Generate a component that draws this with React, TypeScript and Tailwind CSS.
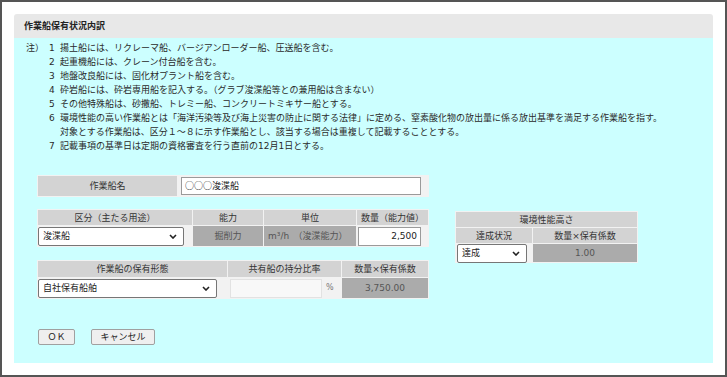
import React from 'react';

const notes: { no: string; lines: string[] }[] = [
  { no: '1', lines: ['揚土船には、リクレーマ船、バージアンローダー船、圧送船を含む。'] },
  { no: '2', lines: ['起重機船には、クレーン付台船を含む。'] },
  { no: '3', lines: ['地盤改良船には、固化材プラント船を含む。'] },
  { no: '4', lines: ['砕岩船には、砕岩専用船を記入する。（グラブ浚渫船等との兼用船は含まない）'] },
  { no: '5', lines: ['その他特殊船は、砂撒船、トレミー船、コンクリートミキサー船とする。'] },
  {
    no: '6',
    lines: [
      '環境性能の高い作業船とは「海洋汚染等及び海上災害の防止に関する法律」に定める、窒素酸化物の放出量に係る放出基準を満足する作業船を指す。',
      '対象とする作業船は、区分１～８に示す作業船とし、該当する場合は重複して記載することとする。',
    ],
  },
  { no: '7', lines: ['記載事項の基準日は定期の資格審査を行う直前の12月1日とする。'] },
];

function Chevron() {
  return (
    <svg width="8" height="5" viewBox="0 0 8 5" className="shrink-0">
      <path d="M1 1l3 3 3-3" fill="none" stroke="#222" strokeWidth="1.6" />
    </svg>
  );
}

function SelectBox({ value, width }: { value: string; width: string }) {
  return (
    <div
      className={`flex h-[19px] items-center justify-between rounded-[2px] border border-[#767676] bg-white pl-[4px] pr-[6px] text-[#222] ${width}`}
    >
      <span>{value}</span>
      <Chevron />
    </div>
  );
}

const head = 'flex items-center justify-center bg-[#d3d3d3] text-[#333]';
const gray = 'flex items-center bg-[#ababab] text-[#555]';

export default function App() {
  return (
    <div className="h-[377px] w-[727px] border-2 border-[#555] bg-white p-[12px] font-['DejaVu_Sans','Noto_Sans_CJK_JP',sans-serif] text-[9px] leading-[14px] text-[#2a2a2a]">
      <div className="flex h-full flex-col">
        <div className="flex h-[24px] shrink-0 items-center rounded-t-[3px] bg-[#e8e8e8] pl-[10px] font-bold text-[#222]">
          作業船保有状況内訳
        </div>

        <div className="flex-1 bg-[#ccffff] pl-[12px] pt-[3px]">
          {/* notes */}
          <div>
            {notes.map((n, i) => (
              <div key={n.no} className="flex">
                <span className="w-[23px] shrink-0">{i === 0 ? '注）' : ''}</span>
                <span className="w-[11px] shrink-0">{n.no}</span>
                <div>
                  {n.lines.map((l) => (
                    <div key={l}>{l}</div>
                  ))}
                </div>
              </div>
            ))}
          </div>

          <div className="ml-[11px] mt-[22px]">
            {/* vessel name */}
            <div className="grid w-[392px] grid-cols-[139px_250px] gap-px bg-[#f2f2f2] p-px">
              <div className={`${head} h-[20px]`}>作業船名</div>
              <div className="flex items-center pl-[3px]">
                <div className="flex h-[18px] w-[240px] items-center border border-[#9a9a9a] bg-white pl-[3px] text-[#222]">
                  <span className="font-['Noto_Sans_CJK_JP',sans-serif]">○○○浚渫船</span>
                </div>
              </div>
            </div>

            <div className="mt-[12px] flex items-start gap-[26px]">
              <div>
                {/* classification */}
                <div className="grid w-[392px] grid-cols-[154px_70px_92px_71px] grid-rows-[15px_20px] gap-px bg-[#f2f2f2] p-px">
                  <div className={head}>区分（主たる用途）</div>
                  <div className={head}>能力</div>
                  <div className={head}>単位</div>
                  <div className={head}>数量（能力値）</div>
                  <div className="flex items-center">
                    <SelectBox value="浚渫船" width="w-[146px]" />
                  </div>
                  <div className={`${gray} justify-center`}>掘削力</div>
                  <div className={`${gray} pl-[4px]`}>m³/h　（浚渫能力）</div>
                  <div className="flex items-center pl-px">
                    <div className="flex h-[19px] w-[63px] items-center justify-end border border-[#9a9a9a] bg-white pr-[3px] text-[#222]">
                      2,500
                    </div>
                  </div>
                </div>

                {/* ownership */}
                <div className="mt-[13px] grid w-[392px] grid-cols-[189px_113px_86px] grid-rows-[16px_20px] gap-px bg-[#f2f2f2] p-px">
                  <div className={head}>作業船の保有形態</div>
                  <div className={head}>共有船の持分比率</div>
                  <div className={head}>数量×保有係数</div>
                  <div className="flex items-center">
                    <SelectBox value="自社保有船舶" width="w-[179px]" />
                  </div>
                  <div className="flex items-center pl-[2px]">
                    <div className="h-[19px] w-[92px] border border-[#e2e2e2] bg-[#f8f8f8]" />
                    <span className="ml-[4px] text-[8px] text-[#777]">%</span>
                  </div>
                  <div className={`${gray} justify-center`}>3,750.00</div>
                </div>
              </div>

              {/* environmental performance */}
              <div className="mt-[2px] grid w-[183px] grid-cols-[76px_104px] grid-rows-[15px_15px_18px] gap-px bg-[#f2f2f2] p-px">
                <div className={`${head} col-span-2`}>環境性能高さ</div>
                <div className={head}>達成状況</div>
                <div className={head}>数量×保有係数</div>
                <div className="flex items-center pl-px">
                  <SelectBox value="達成" width="w-[70px]" />
                </div>
                <div className={`${gray} justify-center`}>1.00</div>
              </div>
            </div>

            <div className="ml-px mt-[30px] flex gap-[16px]">
              <button className="flex h-[16px] w-[37px] items-center justify-center rounded-[2px] border border-[#a0a0a0] bg-[#efefef] text-[#222]">
                ＯＫ
              </button>
              <button className="flex h-[16px] w-[64px] items-center justify-center rounded-[2px] border border-[#a0a0a0] bg-[#efefef] text-[#222]">
                キャンセル
              </button>
            </div>
          </div>
        </div>
      </div>
    </div>
  );
}
